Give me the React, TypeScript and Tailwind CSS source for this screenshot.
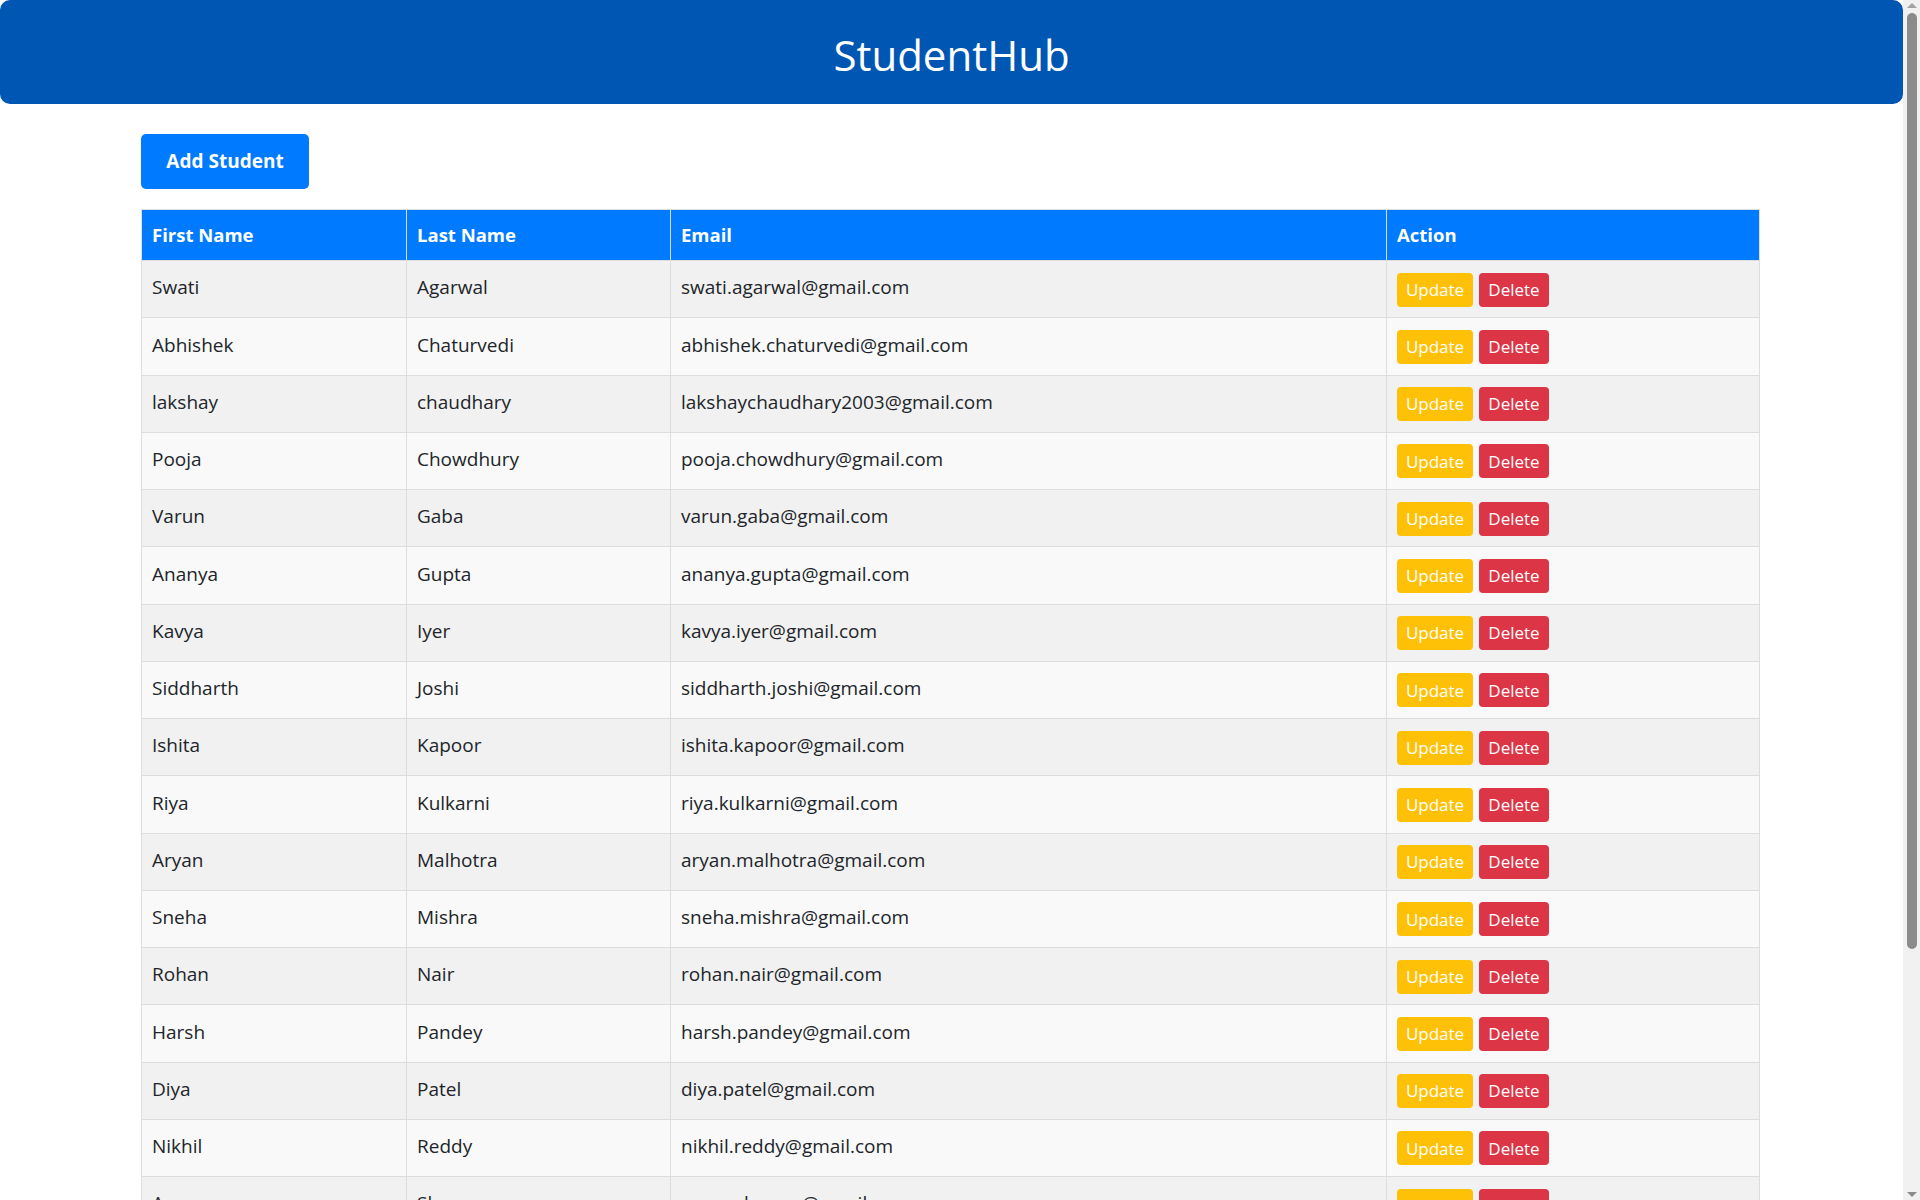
const students = [
  { first: "Swati", last: "Agarwal", email: "swati.agarwal@gmail.com" },
  { first: "Abhishek", last: "Chaturvedi", email: "abhishek.chaturvedi@gmail.com" },
  { first: "lakshay", last: "chaudhary", email: "lakshaychaudhary2003@gmail.com" },
  { first: "Pooja", last: "Chowdhury", email: "pooja.chowdhury@gmail.com" },
  { first: "Varun", last: "Gaba", email: "varun.gaba@gmail.com" },
  { first: "Ananya", last: "Gupta", email: "ananya.gupta@gmail.com" },
  { first: "Kavya", last: "Iyer", email: "kavya.iyer@gmail.com" },
  { first: "Siddharth", last: "Joshi", email: "siddharth.joshi@gmail.com" },
  { first: "Ishita", last: "Kapoor", email: "ishita.kapoor@gmail.com" },
  { first: "Riya", last: "Kulkarni", email: "riya.kulkarni@gmail.com" },
  { first: "Aryan", last: "Malhotra", email: "aryan.malhotra@gmail.com" },
  { first: "Sneha", last: "Mishra", email: "sneha.mishra@gmail.com" },
  { first: "Rohan", last: "Nair", email: "rohan.nair@gmail.com" },
  { first: "Harsh", last: "Pandey", email: "harsh.pandey@gmail.com" },
  { first: "Diya", last: "Patel", email: "diya.patel@gmail.com" },
  { first: "Nikhil", last: "Reddy", email: "nikhil.reddy@gmail.com" },
  { first: "Aarav", last: "Sharma", email: "aarav.sharma@gmail.com" },
  { first: "Meera", last: "Singh", email: "meera.singh@gmail.com" },
  { first: "Karan", last: "Verma", email: "karan.verma@gmail.com" },
];

const App = () => {
  return (
    <div className="min-h-screen w-[1903px] bg-white font-['Open_Sans',sans-serif] text-[#212529]">
      {/* Header bar */}
      <header className="flex h-[104px] items-center justify-center rounded-[10px] bg-[#0056b3]">
        <h1 className="pt-[5px] text-[42px] font-normal text-white">StudentHub</h1>
      </header>

      <main className="ml-[141px] w-[1619px] pt-[30px] pb-10">
        <button className="h-[55px] w-[168px] rounded-[5px] bg-[#007bff] text-[19px] font-bold text-white">
          Add Student
        </button>

        <table className="mt-[20px] w-full table-fixed border-collapse border border-[#dddddd]">
          <thead>
            <tr className="h-[51px] bg-[#007bff] text-left text-white">
              <th className="w-[265px] border border-[#dddddd] px-[10px] text-[18.5px] font-bold">First Name</th>
              <th className="w-[264px] border border-[#dddddd] px-[10px] text-[18.5px] font-bold">Last Name</th>
              <th className="w-[716px] border border-[#dddddd] px-[10px] text-[18.5px] font-bold">Email</th>
              <th className="border border-[#dddddd] px-[10px] text-[18.5px] font-bold">Action</th>
            </tr>
          </thead>
          <tbody>
            {students.map((s, i) => (
              <tr
                key={s.email}
                className={i % 2 === 0 ? "h-[57.25px] bg-[#f1f1f1]" : "h-[57.25px] bg-[#f9f9f9]"}
              >
                <td className="border border-[#dddddd] px-[10px] pb-[3px] text-[19px]">{s.first}</td>
                <td className="border border-[#dddddd] px-[10px] pb-[3px] text-[19px]">{s.last}</td>
                <td className="border border-[#dddddd] px-[10px] pb-[3px] text-[19px]">{s.email}</td>
                <td className="border border-[#dddddd] px-[10px]">
                  <div className="flex items-center gap-[6px] pt-[1px]">
                    <button className="h-[34px] w-[76px] rounded-[4px] bg-[#ffc107] text-[17px] text-white">
                      Update
                    </button>
                    <button className="h-[34px] w-[70px] rounded-[4px] bg-[#dc3545] text-[17px] text-white">
                      Delete
                    </button>
                  </div>
                </td>
              </tr>
            ))}
          </tbody>
        </table>
      </main>

      {/* Browser scrollbar */}
      <div className="fixed top-0 right-0 flex h-screen w-[17px] flex-col items-center bg-[#f1f1f1] py-[3px]">
        <div className="h-0 w-0 border-x-[5px] border-b-[5px] border-x-transparent border-b-[#a3a3a3]" />
        <div className="mt-[5px] h-[936px] w-[10px] rounded-full bg-[#8b8b8b]" />
        <div className="flex-1" />
        <div className="h-0 w-0 border-x-[5px] border-t-[5px] border-x-transparent border-t-[#8b8b8b]" />
      </div>
    </div>
  );
};

export default App;
